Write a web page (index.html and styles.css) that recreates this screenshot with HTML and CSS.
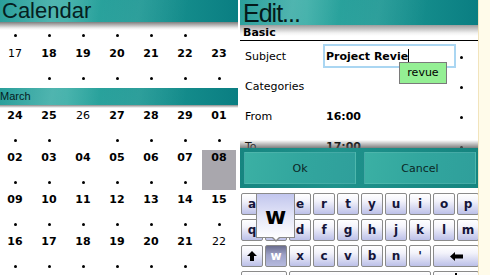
FILE: index.html
```html
<!DOCTYPE html>
<html lang="fr">

<head>
	<meta charset="UTF-8">
	<meta name="viewport" content="width=device-width, initial-scale=1.0">
	<title>Calendar</title>
	<link rel="stylesheet" href="styles.css">
</head>

<body>

	<div class="screen">

		<!-- month view -->
		<section class="calendar">
			<div class="cal-title">Calendar</div>

			<div class="week tail">
				<div class="day"><i class="dot"></i></div>
				<div class="day"><i class="dot"></i></div>
				<div class="day"><i class="dot"></i></div>
				<div class="day"><i class="dot"></i></div>
				<div class="day"><i class="dot"></i></div>
				<div class="day"><i class="dot"></i></div>
				<div class="day"></div>
			</div>

			<div class="week">
				<div class="day light"><span class="num">17</span></div>
				<div class="day"><span class="num">18</span><i class="dot"></i></div>
				<div class="day"><span class="num">19</span><i class="dot"></i></div>
				<div class="day"><span class="num">20</span><i class="dot"></i></div>
				<div class="day"><span class="num">21</span><i class="dot"></i></div>
				<div class="day"><span class="num">22</span><i class="dot"></i></div>
				<div class="day"><span class="num">23</span><i class="dot"></i></div>
			</div>

			<div class="month">March</div>

			<div class="week">
				<div class="day"><span class="num">24</span><i class="dot"></i></div>
				<div class="day"><span class="num">25</span><i class="dot"></i></div>
				<div class="day light"><span class="num">26</span></div>
				<div class="day"><span class="num">27</span><i class="dot"></i></div>
				<div class="day"><span class="num">28</span><i class="dot"></i></div>
				<div class="day"><span class="num">29</span><i class="dot"></i></div>
				<div class="day"><span class="num">01</span><i class="dot"></i></div>
			</div>

			<div class="week">
				<div class="day"><span class="num">02</span><i class="dot"></i></div>
				<div class="day"><span class="num">03</span><i class="dot"></i></div>
				<div class="day"><span class="num">04</span><i class="dot"></i></div>
				<div class="day"><span class="num">05</span><i class="dot"></i></div>
				<div class="day"><span class="num">06</span><i class="dot"></i></div>
				<div class="day"><span class="num">07</span><i class="dot"></i></div>
				<div class="day today"><span class="num">08</span></div>
			</div>

			<div class="week">
				<div class="day"><span class="num">09</span><i class="dot"></i></div>
				<div class="day"><span class="num">10</span><i class="dot"></i></div>
				<div class="day"><span class="num">11</span><i class="dot"></i></div>
				<div class="day"><span class="num">12</span><i class="dot"></i></div>
				<div class="day"><span class="num">13</span><i class="dot"></i></div>
				<div class="day"><span class="num">14</span><i class="dot"></i></div>
				<div class="day"><span class="num">15</span><i class="dot"></i></div>
			</div>

			<div class="week">
				<div class="day"><span class="num">16</span><i class="dot"></i></div>
				<div class="day"><span class="num">17</span><i class="dot"></i></div>
				<div class="day"><span class="num">18</span><i class="dot"></i></div>
				<div class="day"><span class="num">19</span><i class="dot"></i></div>
				<div class="day"><span class="num">20</span><i class="dot"></i></div>
				<div class="day"><span class="num">21</span><i class="dot"></i></div>
				<div class="day light"><span class="num">22</span></div>
			</div>
		</section>

		<!-- appointment editor -->
		<section class="edit">
			<div class="edit-title">Edit...</div>
			<div class="group">Basic</div>

			<div class="rows">
				<div class="row">
					<span class="label">Subject</span>
					<div class="input">Project Revie<span class="caret"></span>
						<div class="suggest">revue</div>
					</div>
					<i class="mark"></i>
				</div>
				<div class="row">
					<span class="label">Categories</span>
					<span></span>
					<i class="mark"></i>
				</div>
				<div class="row">
					<span class="label">From</span>
					<span class="value">16:00</span>
					<i class="mark"></i>
				</div>
				<div class="row">
					<span class="label">To</span>
					<span class="value">17:00</span>
					<i class="mark"></i>
				</div>
			</div>

			<div class="actions">
				<div class="btn">Ok</div>
				<div class="btn">Cancel</div>
			</div>

			<div class="keys">
				<div class="key">a</div>
				<div class="key">z</div>
				<div class="key">e</div>
				<div class="key">r</div>
				<div class="key">t</div>
				<div class="key">y</div>
				<div class="key">u</div>
				<div class="key">i</div>
				<div class="key">o</div>
				<div class="key">p</div>

				<div class="key">q</div>
				<div class="key">s</div>
				<div class="key">d</div>
				<div class="key">f</div>
				<div class="key">g</div>
				<div class="key">h</div>
				<div class="key">j</div>
				<div class="key">k</div>
				<div class="key">l</div>
				<div class="key">m</div>

				<div class="key">
					<svg width="10" height="10" viewBox="0 0 10 10"><path d="M5 0 L10 5 L7 5 L7 10 L3 10 L3 5 L0 5 Z" fill="#000"/></svg>
				</div>
				<div class="key pressed">w</div>
				<div class="key">x</div>
				<div class="key">c</div>
				<div class="key">v</div>
				<div class="key">b</div>
				<div class="key">n</div>
				<div class="key">'</div>
				<div class="key wide2">
					<svg width="13" height="9" viewBox="0 0 13 9"><path d="M0 4.5 L5 0 L5 2.5 L13 2.5 L13 6.5 L5 6.5 L5 9 Z" fill="#000"/></svg>
				</div>

				<div class="key wide2"></div>
				<div class="key wide6"></div>
				<div class="key wide2 enter"><span class="stem"></span></div>

				<div class="popup">w</div>
			</div>
		</section>

		<div class="edge"></div>
	</div>

</body>

</html>
```

FILE: styles.css
```css
:root {
	--teal: linear-gradient(100deg, rgba(255, 255, 255, 0) 0%, rgba(255, 255, 255, 0.14) 22%, rgba(255, 255, 255, 0) 42%, rgba(255, 255, 255, 0.08) 58%, rgba(0, 0, 0, 0) 78%),
		linear-gradient(90deg, #2a9f9b 0%, #35aba4 28%, #1c9793 58%, #0a7e82 100%);
}

body {
	margin: 0;
	background: #fff;
	font-family: "DejaVu Sans", sans-serif;
	font-size: 11px;
	color: #000;
}

.screen {
	display: flex;
	width: 490px;
	height: 275px;
	overflow: hidden;
}

/* left: month grid */
.calendar {
	flex: none;
	width: 238px;
	overflow: hidden;
}

.cal-title {
	height: 30px;
	line-height: 22px;
	padding-left: 2px;
	font-family: "Liberation Sans", sans-serif;
	font-size: 22px;
	color: #05201f;
	background: linear-gradient(rgba(0, 0, 0, 0) 22px, #7e7e7e 22px, #ededed 28px, #fff 30px), var(--teal);
}

.week {
	display: grid;
	grid-template-columns: repeat(7, 34px);
	height: 42px;
	margin-left: -2px;
}

.day {
	display: flex;
	flex-direction: column;
	align-items: center;
	height: 40px;
}

.num {
	height: 15px;
	line-height: 15px;
	font-weight: bold;
}

.light .num {
	font-weight: normal;
}

.dot {
	width: 3px;
	height: 3px;
	border-radius: 50%;
	background: #000;
	margin-top: 16px;
}

.tail {
	height: 16px;
}

.tail .dot {
	margin-top: 4px;
}

.today {
	background: #a9a7ad;
}

.month {
	height: 20px;
	line-height: 17px;
	font-family: "Liberation Sans", sans-serif;
	font-size: 11px;
	color: #05201f;
	background: linear-gradient(rgba(0, 0, 0, 0) 17px, #8a8a8a 17px, #fff 20px), var(--teal);
}

/* right: editor */
.edit {
	flex: none;
	width: 238px;
	margin-left: 2px;
	display: flex;
	flex-direction: column;
	overflow: hidden;
}

.edit > * {
	flex: none;
}

.edit-title {
	height: 25px;
	line-height: 27px;
	padding-left: 3px;
	font-family: "Liberation Sans", sans-serif;
	font-size: 25px;
	letter-spacing: -1px;
	color: #041a1a;
	background: var(--teal);
	overflow: hidden;
}

.group {
	height: 15px;
	line-height: 15px;
	padding-left: 3px;
	font-weight: bold;
	background: linear-gradient(#9c9c9c, #f2f2f2 8px, #fff 11px);
	border-bottom: 1px solid #000;
}

.rows {
	height: 107px;
	overflow: hidden;
}

.row {
	display: grid;
	grid-template-columns: 83px 133px 1fr;
	align-items: center;
	height: 30px;
}

.label {
	padding-left: 5px;
}

.value {
	padding-left: 3px;
	font-weight: bold;
}

.input {
	position: relative;
	display: flex;
	align-items: center;
	box-sizing: border-box;
	height: 24px;
	padding-left: 1px;
	border: 2px solid #aad6f2;
	font-weight: bold;
}

.caret {
	width: 1px;
	height: 14px;
	background: #000;
}

.suggest {
	position: absolute;
	left: 74px;
	top: 16px;
	box-sizing: border-box;
	width: 48px;
	height: 22px;
	line-height: 20px;
	text-align: center;
	font-weight: normal;
	background: #94ef94;
	border: 1px solid #7a7a7a;
}

.mark {
	width: 3px;
	height: 3px;
	margin-left: 4px;
	margin-top: 2px;
	border-radius: 50%;
	background: #000;
}

.actions {
	position: relative;
	display: flex;
	gap: 8px;
	box-sizing: border-box;
	height: 40px;
	padding: 4px 2px 4px 4px;
	background: linear-gradient(90deg, #168580, #1f928c 40%, #15847f);
}

.actions::before {
	content: "";
	position: absolute;
	left: 0;
	right: 0;
	top: -8px;
	height: 8px;
	background: linear-gradient(rgba(130, 130, 130, 0), rgba(95, 95, 95, 0.8));
}

.btn {
	flex: 1;
	display: flex;
	align-items: center;
	justify-content: center;
	background: linear-gradient(100deg, #3bb0a4, #32a69e 50%, #2f9f9b);
	border: 1px solid rgba(255, 255, 255, 0.1);
	color: #0b2826;
}

/* on-screen keyboard */
.keys {
	position: relative;
	display: grid;
	grid-template-columns: repeat(10, 22px);
	grid-auto-rows: 22px;
	gap: 4px 2px;
	padding: 5px 0 0 1px;
}

.key {
	display: flex;
	align-items: center;
	justify-content: center;
	box-sizing: border-box;
	border: 1px solid #8a8a8a;
	border-radius: 2px;
	background: linear-gradient(#fff, #f3f3fb 35%, #bcc0e8);
	font-weight: bold;
	font-size: 12px;
	color: #15153a;
}

.wide2 {
	grid-column: span 2;
}

.wide6 {
	grid-column: span 6;
}

.pressed {
	background: linear-gradient(#6c6e8e, #9ea2c8 45%, #b6bade);
	color: #fff;
}

.enter {
	align-items: flex-start;
}

.stem {
	width: 2px;
	height: 6px;
	margin-top: 1px;
	background: #000;
}

.popup {
	position: absolute;
	left: 16px;
	top: 5px;
	box-sizing: border-box;
	width: 39px;
	height: 45px;
	line-height: 44px;
	text-align: center;
	border: 1px solid #8a8a8a;
	background: linear-gradient(#c2c6ee, #e6e8f8 55%, #fdfdff);
	font-weight: bold;
	font-size: 23px;
}

.popup::before,
.popup::after {
	content: "";
	position: absolute;
	left: 50%;
	border-style: solid;
	border-color: transparent;
}

.popup::before {
	top: 100%;
	margin-left: -5px;
	border-width: 5px 5px 0;
	border-top-color: #8a8a8a;
}

.popup::after {
	top: 100%;
	margin-left: -4px;
	margin-top: -1px;
	border-width: 4px 4px 0;
	border-top-color: #fdfdff;
}

.edge {
	flex: 1;
	background: #fffbea;
	border-left: 1px solid #f2e4bc;
}
```
